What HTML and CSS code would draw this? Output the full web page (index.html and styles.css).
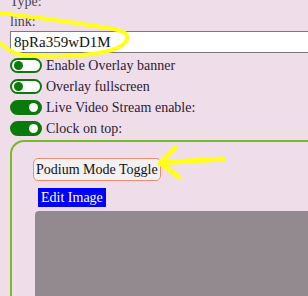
FILE: index.html
```html
<!DOCTYPE html>
<html>
<head>
  <title>Overlay Settings</title>
  <link rel="stylesheet" href="styles.css">
</head>
<body>
  <div class="page">
    <div class="label">Type:</div>
    <div class="label link-label">link:</div>
    <input class="link-input" type="text" value="8pRa359wD1M">

    <div class="switch-row">
      <span class="switch"></span>
      <span>Enable Overlay banner</span>
    </div>
    <div class="switch-row">
      <span class="switch"></span>
      <span>Overlay fullscreen</span>
    </div>
    <div class="switch-row">
      <span class="switch on"></span>
      <span>Live Video Stream enable:</span>
    </div>
    <div class="switch-row">
      <span class="switch on"></span>
      <span>Clock on top:</span>
    </div>

    <div class="panel">
      <button class="podium-btn">Podium Mode Toggle</button>
      <div class="edit-image">Edit Image</div>
      <div class="preview"></div>
    </div>
  </div>

  <!-- yellow marker scribbles on top of the screenshot -->
  <svg class="marks" width="308" height="296" viewBox="0 0 308 296">
    <path d="M0 13 C40 18 90 24 118 30 C132 34 130 44 112 50 C90 56 50 58 22 55 C12 53 6 48 0 43"
          fill="none" stroke="#ffff1a" stroke-width="4" stroke-linecap="round"/>
    <path d="M223 159 C205 160 180 161 161 163 M175 148 L160 163 L179 177"
          fill="none" stroke="#ffff1a" stroke-width="5" stroke-linecap="round" stroke-linejoin="round"/>
  </svg>
</body>
</html>
```

FILE: styles.css
```css
html, body {
  margin: 0;
  padding: 0;
  height: 100%;
  overflow: hidden;
  background-color: #efdde9;
  font-family: "Liberation Serif", "Times New Roman", serif;
  font-size: 14px;
  color: #2a2233;
}
.page {
  padding-left: 10px;
  margin-top: -8px;
}
.label {
  line-height: 20px;
  color: #4a4450;
}
.link-label {
  line-height: 19px;
}
.link-input {
  display: block;
  box-sizing: border-box;
  width: 320px;
  height: 22px;
  margin: 0 0 2px;
  padding: 0 3px;
  border: 1px solid #7a7a7a;
  border-right: none;
  background: #fff;
  font-family: "Liberation Serif", serif;
  font-size: 15px;
  color: #111;
}
.switch-row {
  display: flex;
  align-items: center;
  gap: 4px;
  height: 21px;
}
.switch {
  position: relative;
  box-sizing: border-box;
  width: 32px;
  height: 15px;
  border: 2px solid #0a7a0a;
  border-radius: 8px;
  background: #fff;
}
.switch::after {
  content: "";
  position: absolute;
  top: 1px;
  left: 2px;
  width: 9px;
  height: 9px;
  border-radius: 50%;
  background: #0a7a0a;
}
.switch.on {
  background: #0a7a0a;
}
.switch.on::after {
  left: auto;
  right: 2px;
  background: #fff;
}
.panel {
  margin-top: 1px;
  padding: 16px 0 0 21px;
  border-top: 2px solid #7ab82c;
  border-left: 2px solid #7ab82c;
  border-top-left-radius: 14px;
}
.podium-btn {
  display: block;
  height: 23px;
  padding: 0 2px;
  border: 1px solid #f08c74;
  border-radius: 5px;
  background: #f4f1f2;
  font-family: "Liberation Serif", serif;
  font-size: 14px;
  color: #111;
}
.edit-image {
  display: inline-block;
  margin: 7px 0 0 5px;
  padding: 0 3px;
  line-height: 19px;
  background: #0000ff;
  color: #fff;
}
.preview {
  margin: 4px 0 0 2px;
  width: 300px;
  height: 120px;
  border-top-left-radius: 4px;
  background: #938a8f;
}
.marks {
  position: absolute;
  top: 0;
  left: 0;
  pointer-events: none;
}
```
